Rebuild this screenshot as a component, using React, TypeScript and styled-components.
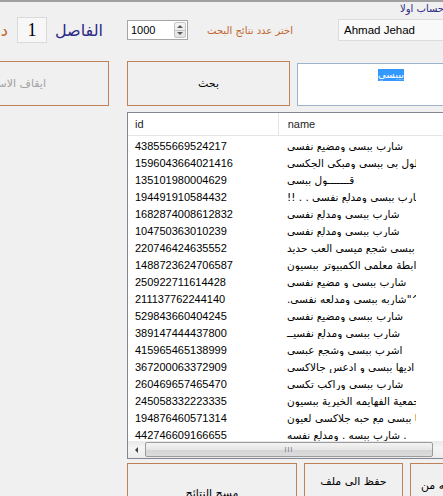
import React from "react";
import styled, { createGlobalStyle } from "styled-components";

const GlobalStyle = createGlobalStyle`
  html, body {
    margin: 0;
    padding: 0;
    background: #f0f0f0;
    overflow: hidden;
  }
`;

const BROWN = "#c08058";
const ORANGE = "#c0642c";
const NAVY = "#2a2a86";

const Form = styled.div`
  width: 443px;
  height: 496px;
  box-sizing: border-box;
  overflow: hidden;
  border-top: 2px solid #a0a0a0;
  background: #f0f0f0;
  font-family: "Liberation Sans", "DejaVu Sans", sans-serif;
  font-size: 11px;
  color: #000;
`;

const HintRow = styled.div`
  height: 14px;
  display: flex;
  padding-left: 400px;
`;

const Hint = styled.div`
  flex-shrink: 0;
  direction: rtl;
  white-space: nowrap;
  color: ${NAVY};
  font-family: "DejaVu Sans", sans-serif;
  font-size: 10px;
  line-height: 14px;
`;

const TopRow = styled.div`
  height: 28px;
  display: flex;
  align-items: center;
`;

const Label = styled.div<{ $w: number; $gap?: number; $color?: string; $size?: number; $clip?: boolean }>`
  flex-shrink: 0;
  width: ${(p) => p.$w}px;
  margin-left: ${(p) => p.$gap ?? 0}px;
  direction: rtl;
  white-space: nowrap;
  overflow: ${(p) => (p.$clip ? "hidden" : "visible")};
  text-align: right;
  color: ${(p) => p.$color ?? "#000"};
  font-family: "DejaVu Sans", sans-serif;
  font-size: ${(p) => p.$size ?? 11}px;
`;

const NumberBox = styled.div`
  flex-shrink: 0;
  width: 30px;
  height: 26px;
  margin-left: 9px;
  box-sizing: border-box;
  border: 1px solid #dadada;
  background: #f7f7f7;
  display: flex;
  align-items: center;
  justify-content: center;
  font-family: "Liberation Serif", serif;
  font-size: 18px;
`;

const Spin = styled.div`
  flex-shrink: 0;
  width: 61px;
  height: 20px;
  margin-left: 24px;
  box-sizing: border-box;
  border: 1px solid #a5a5a5;
  background: #fff;
  display: flex;
  align-items: center;
`;

const SpinValue = styled.span`
  flex: 1;
  padding-left: 3px;
  font-size: 11px;
`;

const SpinButtons = styled.div`
  width: 12px;
  height: 16px;
  margin-right: 1px;
  box-sizing: border-box;
  border: 1px solid #c4c4c4;
  border-radius: 2px;
  background: linear-gradient(#f6f6f6, #e2e2e2);
  display: flex;
  flex-direction: column;
`;

const SpinHalf = styled.div<{ $down?: boolean }>`
  flex: 1;
  display: flex;
  align-items: center;
  justify-content: center;
  border-top: ${(p) => (p.$down ? "1px solid #c4c4c4" : "none")};
  &::after {
    content: "";
    border-left: 3px solid transparent;
    border-right: 3px solid transparent;
    ${(p) => (p.$down ? "border-top: 3px solid #5a5a5a;" : "border-bottom: 3px solid #5a5a5a;")}
  }
`;

const TextBox = styled.div<{ $gap: number; $w: number; $h: number }>`
  flex-shrink: 0;
  width: ${(p) => p.$w}px;
  height: ${(p) => p.$h}px;
  margin-left: ${(p) => p.$gap}px;
  box-sizing: border-box;
  border: 1px solid #dcdcdc;
  background: #f9f9f9;
  display: flex;
  align-items: center;
  padding-left: 5px;
  font-size: 11.5px;
`;

const ActionRow = styled.div`
  margin-top: 17px;
  height: 45px;
  display: flex;
  align-items: stretch;
`;

const Button = styled.div<{
  $w: number;
  $h?: number;
  $gap?: number;
  $disabled?: boolean;
  $open?: boolean;
  $end?: boolean;
}>`
  flex-shrink: 0;
  width: ${(p) => p.$w}px;
  ${(p) => (p.$h ? `height: ${p.$h}px;` : "")}
  margin-left: ${(p) => p.$gap ?? 0}px;
  box-sizing: border-box;
  border: 1px solid ${BROWN};
  ${(p) => (p.$open ? "border-left: none;" : "")}
  background: #f0f0f0;
  display: flex;
  align-items: center;
  justify-content: ${(p) => (p.$end ? "flex-end" : "center")};
  overflow: hidden;
  color: ${(p) => (p.$disabled ? "#a3a3a3" : "#000")};
  font-family: "DejaVu Sans", sans-serif;
  font-size: 11px;
`;

const ButtonText = styled.span<{ $shift?: number }>`
  flex-shrink: 0;
  direction: rtl;
  white-space: nowrap;
  text-align: center;
  line-height: 15px;
  ${(p) => (p.$shift ? `margin-right: ${p.$shift}px;` : "")}
`;

const SearchBox = styled.div`
  flex-shrink: 0;
  width: 188px;
  margin-left: 7px;
  margin-top: 2px;
  box-sizing: border-box;
  border: 1px solid #9db3cc;
  background: #fff;
  display: flex;
  justify-content: center;
  padding-top: 5px;
`;

const Selected = styled.span`
  height: 12px;
  line-height: 12px;
  background: #3399ff;
  color: #fff;
  font-family: "DejaVu Sans", sans-serif;
  font-size: 10px;
`;

const Body = styled.div`
  margin-top: 6px;
  padding-left: 127px;
  display: flex;
  flex-direction: column;
`;

const List = styled.div`
  width: 420px;
  height: 347px;
  box-sizing: border-box;
  border: 1px solid #828790;
  background: #fff;
  display: flex;
  flex-direction: column;
  overflow: hidden;
`;

const Header = styled.div`
  flex-shrink: 0;
  height: 23px;
  box-sizing: border-box;
  border-bottom: 1px solid #e5e5e5;
  display: flex;
`;

const HeadCell = styled.div<{ $w: number; $pad: number }>`
  width: ${(p) => p.$w}px;
  box-sizing: border-box;
  border-right: 1px solid #e5e5e5;
  display: flex;
  align-items: center;
  padding-left: ${(p) => p.$pad}px;
  padding-bottom: 1px;
  color: #1e1e1e;
`;

const Rows = styled.div`
  flex: 1;
  overflow: hidden;
  padding-top: 1px;
`;

const Row = styled.div`
  height: 17px;
  display: flex;
  align-items: center;
`;

const IdCell = styled.div`
  width: 150px;
  box-sizing: border-box;
  padding-left: 7px;
  font-size: 11px;
`;

const NameCell = styled.div`
  width: 138px;
  box-sizing: border-box;
  padding-left: 9px;
  white-space: nowrap;
  overflow: hidden;
  font-family: "DejaVu Sans", sans-serif;
  font-size: 10.5px;
`;

const HScroll = styled.div`
  flex-shrink: 0;
  height: 17px;
  display: flex;
  align-items: center;
  background: linear-gradient(#e9e9e9, #f5f5f5 40%, #ececec);
`;

const Arrow = styled.div`
  width: 17px;
  height: 17px;
  display: flex;
  align-items: center;
  justify-content: center;
  &::after {
    content: "";
    border-top: 3px solid transparent;
    border-bottom: 3px solid transparent;
    border-right: 3px solid #404040;
  }
`;

const Thumb = styled.div`
  width: 288px;
  height: 15px;
  box-sizing: border-box;
  border: 1px solid #9b9b9b;
  border-radius: 2px;
  background: linear-gradient(#f4f4f4, #e6e6e6 50%, #d5d5d5 51%, #dcdcdc);
  display: flex;
  align-items: center;
  justify-content: center;
  font-size: 7px;
  letter-spacing: 1px;
  color: #707070;
`;

const BottomRow = styled.div`
  margin-top: 4px;
  display: flex;
  align-items: flex-start;
`;

const rows: [string, string][] = [
  ["438555669524217", "شارب ببسي ومضيع نفسي"],
  ["1596043664021416", "مسطول بي ببسي ومبكي الجكسي"],
  ["135101980004629", "قـــــــول ببسي"],
  ["194491910584432", "!! . . شارب ببسي ومدلع نفسي"],
  ["1682874008612832", "شارب ببسي ومدلع نفسي"],
  ["104750363010239", "شارب ببسي ومدلع نفسي"],
  ["220746424635552", "شارب ببسي شجع ميسي العب حديد"],
  ["1488723624706587", "رابطة معلمي الكمبيوتر ببسيون"],
  ["250922711614428", "شارب ببسي و مضيع نفسي"],
  ["211137762244140", ".شاربه ببسي ومدلعه نفسي\"^_^"],
  ["529843660404245", "شارب ببسي ومضيع نفسي"],
  ["389147444437800", "شارب ببسي ومدلع نفسيــ"],
  ["415965465138999", "اشرب ببسي وشجع عبسي"],
  ["367200063372909", "اديها ببسي و ادعس جالاكسي"],
  ["260469657465470", "شارب ببسي وراكب تكسي"],
  ["245058332223335", "جمعية الفهايمه الخيرية ببسيون"],
  ["194876460571314", "اديها ببسي مع حبه جلاكسي لعيون"],
  ["442746609166655", "شارب ببسه . ومدلع نفسه ."],
];

export default function App() {
  return (
    <>
      <GlobalStyle />
      <Form>
        <HintRow>
          <Hint>يرجى اختيار حساب اولا</Hint>
        </HintRow>

        <TopRow>
          <Label $w={8} $color={ORANGE} $size={16} $clip>
            دقيقة
          </Label>
          <NumberBox>1</NumberBox>
          <Label $w={46} $gap={10} $color={NAVY} $size={16}>
            الفاصل
          </Label>
          <Spin>
            <SpinValue>1000</SpinValue>
            <SpinButtons>
              <SpinHalf />
              <SpinHalf $down />
            </SpinButtons>
          </Spin>
          <Label $w={90} $gap={15} $color={ORANGE} $size={10}>
            اختر عدد نتائج البحث
          </Label>
          <TextBox $gap={45} $w={160} $h={22}>
            Ahmad Jehad
          </TextBox>
        </TopRow>

        <ActionRow>
          <Button $w={109} $open $disabled $end>
            <ButtonText $shift={62}>ايقاف الاستخراج</ButtonText>
          </Button>
          <Button $w={163} $gap={18}>
            <ButtonText>بحث</ButtonText>
          </Button>
          <SearchBox>
            <Selected>بيبسي</Selected>
          </SearchBox>
        </ActionRow>

        <Body>
          <List>
            <Header>
              <HeadCell $w={151} $pad={7}>id</HeadCell>
              <HeadCell $w={268} $pad={9}>name</HeadCell>
            </Header>
            <Rows>
              {rows.map(([id, name]) => (
                <Row key={id}>
                  <IdCell>{id}</IdCell>
                  <NameCell>{name}</NameCell>
                </Row>
              ))}
            </Rows>
            <HScroll>
              <Arrow />
              <Thumb>III</Thumb>
            </HScroll>
          </List>

          <BottomRow>
            <Button $w={170} $h={60}>
              <ButtonText>مسح النتائج</ButtonText>
            </Button>
            <Button $w={99} $h={36} $gap={7}>
              <ButtonText>حفظ الى ملف</ButtonText>
            </Button>
            <Button $w={100} $h={60} $gap={7}>
              <ButtonText $shift={6}>
                اضافة قائمه من
                <br />
                ملف
              </ButtonText>
            </Button>
          </BottomRow>
        </Body>
      </Form>
    </>
  );
}
